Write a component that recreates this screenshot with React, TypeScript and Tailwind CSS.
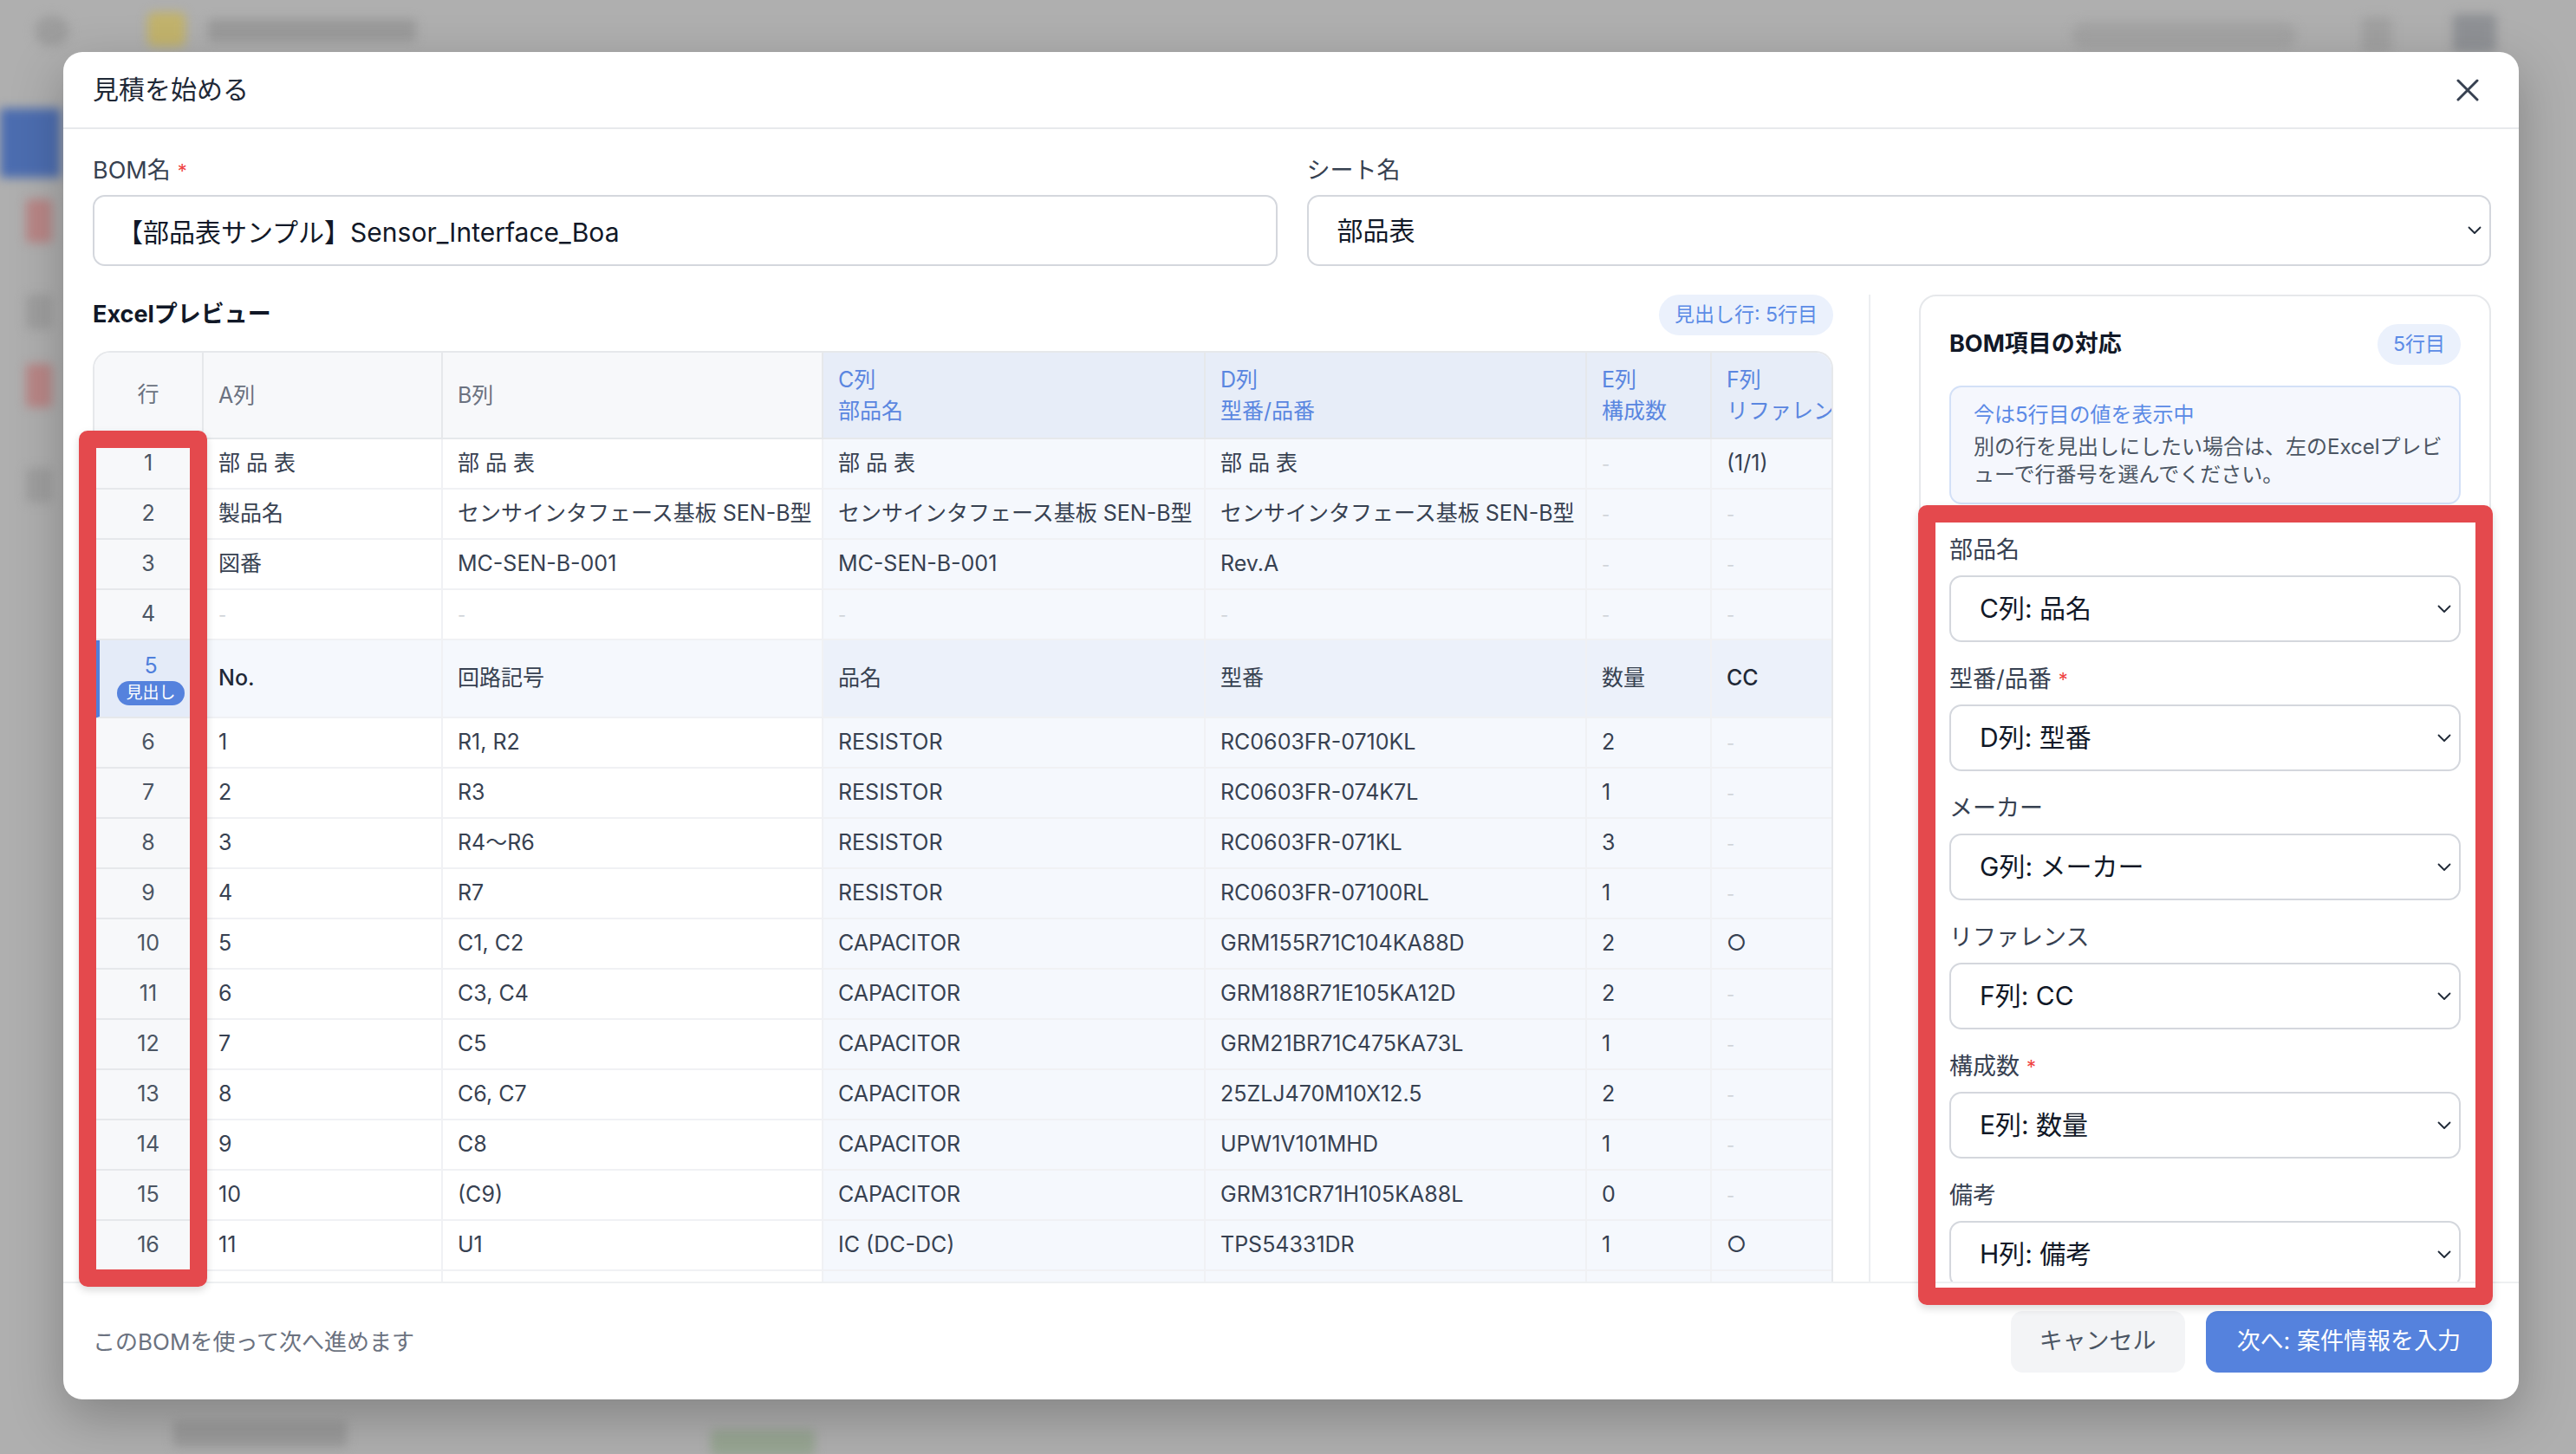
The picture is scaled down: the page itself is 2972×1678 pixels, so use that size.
import type { ReactNode } from 'react';

type Row = { n: number; cells: string[]; head?: boolean };

const rows: Row[] = [
    { n: 1, cells: ['部 品 表', '部 品 表', '部 品 表', '部 品 表', '-', '(1/1)'] },
    { n: 2, cells: ['製品名', 'センサインタフェース基板 SEN-B型', 'センサインタフェース基板 SEN-B型', 'センサインタフェース基板 SEN-B型', '-', '-'] },
    { n: 3, cells: ['図番', 'MC-SEN-B-001', 'MC-SEN-B-001', 'Rev.A', '-', '-'] },
    { n: 4, cells: ['-', '-', '-', '-', '-', '-'] },
    { n: 5, cells: ['No.', '回路記号', '品名', '型番', '数量', 'CC'], head: true },
    { n: 6, cells: ['1', 'R1, R2', 'RESISTOR', 'RC0603FR-0710KL', '2', '-'] },
    { n: 7, cells: ['2', 'R3', 'RESISTOR', 'RC0603FR-074K7L', '1', '-'] },
    { n: 8, cells: ['3', 'R4〜R6', 'RESISTOR', 'RC0603FR-071KL', '3', '-'] },
    { n: 9, cells: ['4', 'R7', 'RESISTOR', 'RC0603FR-07100RL', '1', '-'] },
    { n: 10, cells: ['5', 'C1, C2', 'CAPACITOR', 'GRM155R71C104KA88D', '2', '○'] },
    { n: 11, cells: ['6', 'C3, C4', 'CAPACITOR', 'GRM188R71E105KA12D', '2', '-'] },
    { n: 12, cells: ['7', 'C5', 'CAPACITOR', 'GRM21BR71C475KA73L', '1', '-'] },
    { n: 13, cells: ['8', 'C6, C7', 'CAPACITOR', '25ZLJ470M10X12.5', '2', '-'] },
    { n: 14, cells: ['9', 'C8', 'CAPACITOR', 'UPW1V101MHD', '1', '-'] },
    { n: 15, cells: ['10', '(C9)', 'CAPACITOR', 'GRM31CR71H105KA88L', '0', '-'] },
    { n: 16, cells: ['11', 'U1', 'IC (DC-DC)', 'TPS54331DR', '1', '○'] },
    { n: 17, cells: ['', '', '', '', '', ''] },
];

const headers = [
    { col: 'A列', sub: '' },
    { col: 'B列', sub: '' },
    { col: 'C列', sub: '部品名' },
    { col: 'D列', sub: '型番/品番' },
    { col: 'E列', sub: '構成数' },
    { col: 'F列', sub: 'リファレンス' },
];

const fields = [
    { label: '部品名', value: 'C列: 品名', required: false },
    { label: '型番/品番', value: 'D列: 型番', required: true },
    { label: 'メーカー', value: 'G列: メーカー', required: false },
    { label: 'リファレンス', value: 'F列: CC', required: false },
    { label: '構成数', value: 'E列: 数量', required: true },
    { label: '備考', value: 'H列: 備考', required: false },
];

function Chevron() {
    return (
        <svg width="16" height="10" viewBox="0 0 16 10" fill="none" className="shrink-0">
            <polyline points="1.5,1.5 8,8 14.5,1.5" stroke="#1f2937" strokeWidth="1.8" strokeLinecap="round" strokeLinejoin="round" />
        </svg>
    );
}

function Required() {
    return <span className="ml-[8px] text-[22px] text-[#ef4444]">*</span>;
}

function Cell({ value, mapped, head }: { value: string; mapped: boolean; head?: boolean }) {
    let bg = 'bg-white';
    if (head) bg = mapped ? 'bg-[#ecf1fa]' : 'bg-[#f5f8fd]';
    else if (mapped) bg = 'bg-[#f5f8fd]';
    const isDash = value === '-';
    // latin labels in the heading row read as medium weight, kanji stay regular
    const latin = /^[\x00-\x7F]+$/.test(value);
    const tone = head && latin ? 'font-medium text-[#1f2937]' : 'text-[#374151]';
    return (
        <td className={`${bg} overflow-hidden whitespace-nowrap border-b-2 border-r-2 border-[#f0f1f4] pl-[17px]`}>
            {isDash ? <span className="text-[20px] text-[#cfd3d8]">-</span> : <span className={tone}>{value}</span>}
        </td>
    );
}

function Badge({ children }: { children: ReactNode }) {
    return (
        <span className="flex h-[47px] items-center rounded-full bg-[#ebf1fc] px-[18px] text-[23px] text-[#5b8be6]">
            {children}
        </span>
    );
}

function Backdrop() {
    return (
        <div className="absolute inset-0 blur-[6px]">
            <div className="absolute left-[40px] top-[18px] h-[36px] w-[40px] rounded-full bg-[#9d9d9d]" />
            <div className="absolute left-[170px] top-[14px] h-[40px] w-[44px] rounded-[8px] bg-[#c2b36c]" />
            <div className="absolute left-[240px] top-[22px] h-[26px] w-[240px] rounded bg-[#9a9a9a]" />
            <div className="absolute left-[2390px] top-[26px] h-[30px] w-[260px] rounded-full bg-[#a3a3a3]" />
            <div className="absolute left-[2725px] top-[20px] h-[40px] w-[34px] rounded bg-[#a0a0a0]" />
            <div className="absolute left-[2830px] top-[16px] h-[44px] w-[50px] rounded bg-[#8f9195]" />
            <div className="absolute left-0 top-[125px] h-[80px] w-[70px] bg-[#4c6db0]" />
            <div className="absolute left-[30px] top-[230px] h-[50px] w-[30px] rounded bg-[#b98686]" />
            <div className="absolute left-[30px] top-[340px] h-[40px] w-[30px] rounded bg-[#9e9e9e]" />
            <div className="absolute left-[30px] top-[420px] h-[50px] w-[30px] rounded bg-[#b98686]" />
            <div className="absolute left-[30px] top-[540px] h-[40px] w-[30px] rounded bg-[#9e9e9e]" />
            <div className="absolute left-[200px] top-[1640px] h-[30px] w-[200px] rounded bg-[#9b9b9b]" />
            <div className="absolute left-[820px] top-[1650px] h-[30px] w-[120px] rounded bg-[#97a592]" />
        </div>
    );
}

export default function App() {
    return (
        <div className="relative h-[1678px] w-[2972px] overflow-hidden bg-[#afafaf] font-['Inter','Noto_Sans_CJK_JP',sans-serif] antialiased">
            <Backdrop />
            <div className="relative flex h-full pl-[73px] pt-[60px]">
                <div className="flex h-[1555px] w-[2833px] flex-col overflow-hidden rounded-[22px] bg-white shadow-[0_20px_60px_rgba(0,0,0,0.25)]">
                    {/* header */}
                    <div className="flex h-[89px] shrink-0 items-center justify-between border-b-2 border-[#e8e9ec] pl-[34px] pr-[46px]">
                        <h1 className="text-[30px] text-[#1f2937]">見積を始める</h1>
                        <svg width="26" height="26" viewBox="0 0 26 26" fill="none">
                            <path d="M2 2L24 24M24 2L2 24" stroke="#374151" strokeWidth="3" strokeLinecap="round" />
                        </svg>
                    </div>

                    {/* body */}
                    <div className="flex min-h-0 flex-1 flex-col pl-[34px] pr-[32px] pt-[30px]">
                        <div className="grid shrink-0 grid-cols-2 gap-[34px]">
                            <div>
                                <label className="mb-[10px] flex h-[36px] items-center text-[27px] text-[#374151]">
                                    BOM名<Required />
                                </label>
                                <input
                                    readOnly
                                    value="【部品表サンプル】Sensor_Interface_Boa"
                                    className="h-[82px] w-full rounded-[14px] border-2 border-[#d4d7dd] px-[26px] text-[30px] text-[#111827] outline-none"
                                />
                            </div>
                            <div>
                                <label className="mb-[10px] flex h-[36px] items-center text-[27px] text-[#374151]">シート名</label>
                                <div className="flex h-[82px] items-center justify-between rounded-[14px] border-2 border-[#d4d7dd] pl-[33px] pr-[9px] text-[30px] text-[#111827]">
                                    <span>部品表</span>
                                    <Chevron />
                                </div>
                            </div>
                        </div>

                        <div className="mt-[33px] flex min-h-0 flex-1">
                            {/* excel preview */}
                            <div className="flex w-[2008px] shrink-0 flex-col">
                                <div className="flex h-[47px] shrink-0 items-center justify-between">
                                    <h2 className="text-[27px] font-bold text-[#111827]">Excelプレビュー</h2>
                                    <Badge>見出し行: 5行目</Badge>
                                </div>
                                <div className="mt-[18px] min-h-0 flex-1 overflow-hidden rounded-t-[20px] border-2 border-b-0 border-[#e6e8eb]">
                                    <table className="w-[2096px] table-fixed border-separate border-spacing-0 text-[25px]">
                                        <colgroup>
                                            <col className="w-[126px]" />
                                            <col className="w-[276px]" />
                                            <col className="w-[439px]" />
                                            <col className="w-[441px]" />
                                            <col className="w-[440px]" />
                                            <col className="w-[144px]" />
                                            <col className="w-[230px]" />
                                        </colgroup>
                                        <thead>
                                            <tr>
                                                <th className="h-[100px] border-b-2 border-r-2 border-[#e6e8eb] bg-[#f7f8fa] text-center font-normal text-[#6b7280]">
                                                    行
                                                </th>
                                                {headers.map((h, i) => {
                                                    const mapped = i >= 2;
                                                    return (
                                                        <th
                                                            key={h.col}
                                                            className={`h-[100px] overflow-hidden whitespace-nowrap border-b-2 border-r-2 border-[#e6e8eb] pl-[17px] text-left font-normal leading-[36px] ${
                                                                mapped ? 'bg-[#e7edf8] text-[#5a86e0]' : 'bg-[#f7f8fa] text-[#6b7280]'
                                                            }`}
                                                        >
                                                            <div>{h.col}</div>
                                                            {h.sub && <div>{h.sub}</div>}
                                                        </th>
                                                    );
                                                })}
                                            </tr>
                                        </thead>
                                        <tbody>
                                            {rows.map((r) => (
                                                <tr key={r.n}>
                                                    {r.head ? (
                                                        <td className="h-[90px] border-b-2 border-l-[6px] border-r-2 border-[#e6e8eb] border-l-[#4f7fdc] bg-[#e4ebf8] text-center">
                                                            <div className="flex flex-col items-center">
                                                                <span className="leading-[32px] text-[#4f7fdc]">{r.n}</span>
                                                                <span className="mt-[2px] rounded-full bg-[#5582dd] px-[10px] text-[19px] leading-[28px] text-white">
                                                                    見出し
                                                                </span>
                                                            </div>
                                                        </td>
                                                    ) : (
                                                        <td className="h-[58px] border-b-2 border-r-2 border-[#e6e8eb] bg-[#f7f8fa] text-center text-[#4b5563]">
                                                            {r.n}
                                                        </td>
                                                    )}
                                                    {r.cells.map((c, i) => (
                                                        <Cell key={i} value={c} mapped={i >= 2} head={r.head} />
                                                    ))}
                                                </tr>
                                            ))}
                                        </tbody>
                                    </table>
                                </div>
                            </div>

                            {/* mapping panel */}
                            <div className="ml-[41px] min-w-0 flex-1 overflow-hidden border-l-2 border-[#eceef1] pl-[56px]">
                                <div className="rounded-t-[20px] border-2 border-[#e6e8eb] px-[33px] pb-[40px] pt-[32px]">
                                    <div className="flex h-[47px] items-center justify-between">
                                        <h2 className="text-[27px] font-bold text-[#111827]">BOM項目の対応</h2>
                                        <Badge>5行目</Badge>
                                    </div>
                                    <div className="mt-[24px] rounded-[14px] border-2 border-[#d3e0f7] bg-[#f5f7fd] px-[26px] py-[16px] text-[24px] leading-[32px]">
                                        <div className="whitespace-nowrap text-[#5b8ae6]">今は5行目の値を表示中</div>
                                        <div className="mt-[5px] text-[#4b5563]">
                                            <div className="whitespace-nowrap">別の行を見出しにしたい場合は、左のExcelプレビ</div>
                                            <div className="whitespace-nowrap">ューで行番号を選んでください。</div>
                                        </div>
                                    </div>
                                    <div className="mt-[35px] flex flex-col gap-[25px]">
                                        {fields.map((f) => (
                                            <div key={f.label}>
                                                <div className="mb-[11px] flex h-[36px] items-center text-[27px] text-[#374151]">
                                                    {f.label}
                                                    {f.required && <Required />}
                                                </div>
                                                <div className="flex h-[77px] items-center justify-between rounded-[14px] border-2 border-[#d4d7dd] pl-[33px] pr-[9px] text-[30px] text-[#111827]">
                                                    <span>{f.value}</span>
                                                    <Chevron />
                                                </div>
                                            </div>
                                        ))}
                                    </div>
                                </div>
                            </div>
                        </div>
                    </div>

                    {/* footer */}
                    <div className="flex h-[136px] shrink-0 items-center justify-between border-t-2 border-[#eef0f2] pl-[34px] pr-[31px]">
                        <p className="text-[26px] text-[#6b7280]">このBOMを使って次へ進めます</p>
                        <div className="flex items-center gap-[24px]">
                            <button className="h-[71px] rounded-[14px] bg-[#f3f4f6] px-[33px] text-[27px] text-[#4b5563]">キャンセル</button>
                            <button className="h-[71px] rounded-[14px] bg-[#5582dd] px-[36px] text-[27px] text-white">次へ: 案件情報を入力</button>
                        </div>
                    </div>
                </div>
            </div>

            {/* annotation boxes */}
            <div className="pointer-events-none absolute left-[91px] top-[497px] h-[988px] w-[148px] rounded-[10px] border-[20px] border-[#e4494d] shadow-[0_4px_10px_rgba(0,0,0,0.15)]" />
            <div className="pointer-events-none absolute left-[2213px] top-[583px] h-[923px] w-[663px] rounded-[10px] border-[20px] border-[#e4494d] shadow-[0_4px_10px_rgba(0,0,0,0.15)]" />
        </div>
    );
}
